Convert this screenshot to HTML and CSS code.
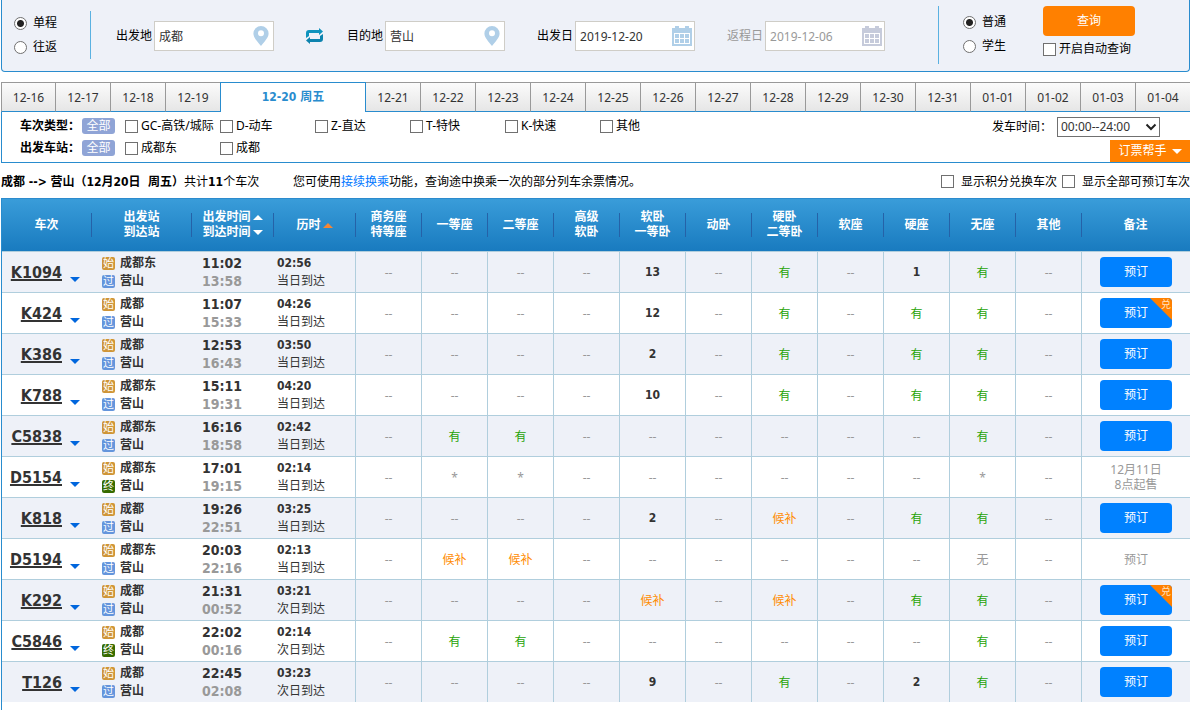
FILE: index.html
```html
<!DOCTYPE html>
<html lang="zh-CN">
<head>
<meta charset="utf-8">
<title>车票查询</title>
<link rel="stylesheet" href="styles.css">
</head>
<body>
<svg class="defs" width="0" height="0" aria-hidden="true">
  <symbol id="pin" viewBox="0 0 16 20"><path d="M8 0a7.6 7.6 0 0 1 7.6 7.6C15.6 12 11 16 8 20 5 16 .4 12 .4 7.6A7.6 7.6 0 0 1 8 0zm0 4.2a3 3 0 1 0 0 6 3 3 0 0 0 0-6z" fill-rule="evenodd"/></symbol>
  <symbol id="calendar" viewBox="0 0 20 20"><path d="M0 2h3V0h4v2h6V0h4v2h3v18H0z"/><path fill="#fff" d="M2 7h16v11H2z"/><path d="M3 8h4v4H3zm5 0h4v4H8zm5 0h4v4h-4zM3 13h4v4H3zm5 0h4v4H8zm5 0h4v4h-4z"/></symbol>
</svg>

<form class="search">
  <div class="choices trip">
    <label><input type="radio" name="trip" checked><span>单程</span></label>
    <label><input type="radio" name="trip"><span>往返</span></label>
  </div>
  <div class="fields">
    <div class="field"><label for="from">出发地</label><span class="box"><input id="from" type="text" value="成都"><svg class="pin"><use href="#pin"/></svg></span></div>
    <button class="swap" type="button" aria-label="交换"><svg viewBox="0 0 17 16"><path fill="#0f93bd" d="M0 10V5q0-3 3-3h10V0l4 3.500-4 3.500V5H3v3z"/><path fill="#0d83ae" d="M17 6v5q0 3-3 3H4v2l-4-3.500L4 9v2h10V8z"/></svg></button>
    <div class="field"><label for="to">目的地</label><span class="box"><input id="to" type="text" value="营山"><svg class="pin"><use href="#pin"/></svg></span></div>
    <div class="field date"><label for="go">出发日</label><span class="box"><input id="go" type="text" value="2019-12-20"><svg class="cal"><use href="#calendar"/></svg></span></div>
    <div class="field date off"><label for="back">返程日</label><span class="box"><input id="back" type="text" value="2019-12-06"><svg class="cal"><use href="#calendar"/></svg></span></div>
  </div>
  <div class="choices kind">
    <label><input type="radio" name="kind" checked><span>普通</span></label>
    <label><input type="radio" name="kind"><span>学生</span></label>
  </div>
  <div class="submit">
    <button class="query" type="button">查询</button>
    <label class="check"><input type="checkbox"><span>开启自动查询</span></label>
  </div>
</form>

<nav class="days">
  <button>12-16</button><button>12-17</button><button>12-18</button><button>12-19</button><button class="current">12-20 周五</button><button>12-21</button><button>12-22</button><button>12-23</button><button>12-24</button><button>12-25</button><button>12-26</button><button>12-27</button><button>12-28</button><button>12-29</button><button>12-30</button><button>12-31</button><button>01-01</button><button>01-02</button><button>01-03</button><button>01-04</button>
</nav>

<section class="filters">
  <div class="filter-rows">
    <div class="filter">
      <b>车次类型：</b><button class="all">全部</button>
      <label class="check"><input type="checkbox"><span>GC-高铁/城际</span></label>
      <label class="check"><input type="checkbox"><span>D-动车</span></label>
      <label class="check"><input type="checkbox"><span>Z-直达</span></label>
      <label class="check"><input type="checkbox"><span>T-特快</span></label>
      <label class="check"><input type="checkbox"><span>K-快速</span></label>
      <label class="check"><input type="checkbox"><span>其他</span></label>
    </div>
    <div class="filter">
      <b>出发车站：</b><button class="all">全部</button>
      <label class="check"><input type="checkbox"><span>成都东</span></label>
      <label class="check"><input type="checkbox"><span>成都</span></label>
    </div>
  </div>
  <div class="side">
    <div class="time"><label for="time">发车时间：</label><span class="select"><select id="time"><option>00:00--24:00</option></select><svg viewBox="0 0 12 8"><path d="M1.500 1.500 6 6l4.500-4.500" fill="none" stroke="#222" stroke-width="2"/></svg></span></div>
    <button class="helper">订票帮手<i class="tri down"></i></button>
  </div>
</section>

<div class="summary">
  <p class="count"><b>成都 --&gt; 营山（12月20日&nbsp; 周五）</b>共计<b>11</b>个车次</p>
  <p>您可使用<a href="#">接续换乘</a>功能，查询途中换乘一次的部分列车余票情况。</p>
  <div class="options">
    <label class="check"><input type="checkbox"><span>显示积分兑换车次</span></label>
    <label class="check"><input type="checkbox"><span>显示全部可预订车次</span></label>
  </div>
</div>

<main class="results">
<table class="trains">
  <colgroup><col class="c-no"><col class="c-station"><col class="c-time"><col class="c-time"><col class="c-seat" span="11"><col></colgroup>
  <thead>
    <tr><th>车次</th><th>出发站<br>到达站</th><th><span class="sort">出发时间<i class="tri up"></i></span><span class="sort">到达时间<i class="tri down"></i></span></th><th><span class="sort">历时<i class="tri up on"></i></span></th><th>商务座<br>特等座</th><th>一等座</th><th>二等座</th><th>高级<br>软卧</th><th>软卧<br>一等卧</th><th>动卧</th><th>硬卧<br>二等卧</th><th>软座</th><th>硬座</th><th>无座</th><th>其他</th><th>备注</th></tr>
  </thead>
  <tbody>
    <tr><td class="no"><a href="#">K1094</a><i class="tri down"></i></td><td class="st"><p><i class="s">始</i>成都东</p><p><i class="g">过</i>营山</p></td><td class="tm"><p>11:02</p><p>13:58</p></td><td class="du"><b>02:56</b><p>当日到达</p></td><td>--</td><td>--</td><td>--</td><td>--</td><td class="num">13</td><td>--</td><td class="yes">有</td><td>--</td><td class="num">1</td><td class="yes">有</td><td>--</td><td><button class="book">预订</button></td></tr>
    <tr><td class="no"><a href="#">K424</a><i class="tri down"></i></td><td class="st"><p><i class="s">始</i>成都</p><p><i class="g">过</i>营山</p></td><td class="tm"><p>11:07</p><p>15:33</p></td><td class="du"><b>04:26</b><p>当日到达</p></td><td>--</td><td>--</td><td>--</td><td>--</td><td class="num">12</td><td>--</td><td class="yes">有</td><td>--</td><td class="yes">有</td><td class="yes">有</td><td>--</td><td><button class="book">预订<span class="points">兑</span></button></td></tr>
    <tr><td class="no"><a href="#">K386</a><i class="tri down"></i></td><td class="st"><p><i class="s">始</i>成都</p><p><i class="g">过</i>营山</p></td><td class="tm"><p>12:53</p><p>16:43</p></td><td class="du"><b>03:50</b><p>当日到达</p></td><td>--</td><td>--</td><td>--</td><td>--</td><td class="num">2</td><td>--</td><td class="yes">有</td><td>--</td><td class="yes">有</td><td class="yes">有</td><td>--</td><td><button class="book">预订</button></td></tr>
    <tr><td class="no"><a href="#">K788</a><i class="tri down"></i></td><td class="st"><p><i class="s">始</i>成都东</p><p><i class="g">过</i>营山</p></td><td class="tm"><p>15:11</p><p>19:31</p></td><td class="du"><b>04:20</b><p>当日到达</p></td><td>--</td><td>--</td><td>--</td><td>--</td><td class="num">10</td><td>--</td><td class="yes">有</td><td>--</td><td class="yes">有</td><td class="yes">有</td><td>--</td><td><button class="book">预订</button></td></tr>
    <tr><td class="no"><a href="#">C5838</a><i class="tri down"></i></td><td class="st"><p><i class="s">始</i>成都东</p><p><i class="g">过</i>营山</p></td><td class="tm"><p>16:16</p><p>18:58</p></td><td class="du"><b>02:42</b><p>当日到达</p></td><td>--</td><td class="yes">有</td><td class="yes">有</td><td>--</td><td>--</td><td>--</td><td>--</td><td>--</td><td>--</td><td class="yes">有</td><td>--</td><td><button class="book">预订</button></td></tr>
    <tr><td class="no"><a href="#">D5154</a><i class="tri down"></i></td><td class="st"><p><i class="s">始</i>成都东</p><p><i class="z">终</i>营山</p></td><td class="tm"><p>17:01</p><p>19:15</p></td><td class="du"><b>02:14</b><p>当日到达</p></td><td>--</td><td>*</td><td>*</td><td>--</td><td>--</td><td>--</td><td>--</td><td>--</td><td>--</td><td>*</td><td>--</td><td>12月11日<br>8点起售</td></tr>
    <tr><td class="no"><a href="#">K818</a><i class="tri down"></i></td><td class="st"><p><i class="s">始</i>成都</p><p><i class="g">过</i>营山</p></td><td class="tm"><p>19:26</p><p>22:51</p></td><td class="du"><b>03:25</b><p>当日到达</p></td><td>--</td><td>--</td><td>--</td><td>--</td><td class="num">2</td><td>--</td><td class="wait">候补</td><td>--</td><td class="yes">有</td><td class="yes">有</td><td>--</td><td><button class="book">预订</button></td></tr>
    <tr><td class="no"><a href="#">D5194</a><i class="tri down"></i></td><td class="st"><p><i class="s">始</i>成都东</p><p><i class="g">过</i>营山</p></td><td class="tm"><p>20:03</p><p>22:16</p></td><td class="du"><b>02:13</b><p>当日到达</p></td><td>--</td><td class="wait">候补</td><td class="wait">候补</td><td>--</td><td>--</td><td>--</td><td>--</td><td>--</td><td>--</td><td>无</td><td>--</td><td>预订</td></tr>
    <tr><td class="no"><a href="#">K292</a><i class="tri down"></i></td><td class="st"><p><i class="s">始</i>成都</p><p><i class="g">过</i>营山</p></td><td class="tm"><p>21:31</p><p>00:52</p></td><td class="du"><b>03:21</b><p>次日到达</p></td><td>--</td><td>--</td><td>--</td><td>--</td><td class="wait">候补</td><td>--</td><td class="wait">候补</td><td>--</td><td class="yes">有</td><td class="yes">有</td><td>--</td><td><button class="book">预订<span class="points">兑</span></button></td></tr>
    <tr><td class="no"><a href="#">C5846</a><i class="tri down"></i></td><td class="st"><p><i class="s">始</i>成都</p><p><i class="z">终</i>营山</p></td><td class="tm"><p>22:02</p><p>00:16</p></td><td class="du"><b>02:14</b><p>次日到达</p></td><td>--</td><td class="yes">有</td><td class="yes">有</td><td>--</td><td>--</td><td>--</td><td>--</td><td>--</td><td>--</td><td class="yes">有</td><td>--</td><td><button class="book">预订</button></td></tr>
    <tr><td class="no"><a href="#">T126</a><i class="tri down"></i></td><td class="st"><p><i class="s">始</i>成都</p><p><i class="g">过</i>营山</p></td><td class="tm"><p>22:45</p><p>02:08</p></td><td class="du"><b>03:23</b><p>次日到达</p></td><td>--</td><td>--</td><td>--</td><td>--</td><td class="num">9</td><td>--</td><td class="yes">有</td><td>--</td><td class="num">2</td><td class="yes">有</td><td>--</td><td><button class="book">预订</button></td></tr>
  </tbody>
</table>
</main>
</body>
</html>
```
FILE: styles.css
```css
* { box-sizing: border-box; }
body, button, input, select {
  font: 12px/16px "Noto Sans", "Noto Sans CJK SC", sans-serif;
}
b, th, .current, .no a, .st, .tm, .num {
  font-family: "DejaVu Sans Condensed", "Noto Sans CJK SC", sans-serif;
  font-weight: bold;
}
body { margin: 0 0 0 1px; color: #000; background: #fff; overflow-x: hidden; }
p { margin: 0; }
i { font-style: normal; }
button { border: 0; padding: 0; cursor: pointer; white-space: nowrap; }
a { text-decoration: none; }
.defs { display: block; }

input[type="radio"], input[type="checkbox"] {
  appearance: none; flex: none; width: 13px; height: 13px; margin: 0;
  border: 1px solid #707070; background: #fff;
}
input[type="radio"] { border-radius: 50%; }
input[type="radio"]:checked { background: radial-gradient(circle, #222 3px, #fff 4px); }
.check { display: flex; align-items: center; gap: 3px; white-space: nowrap; }

.tri { display: inline-block; border: 5px solid transparent; }
.tri.down { border-top-color: currentColor; border-bottom: 0; }
.tri.up { border-bottom-color: currentColor; border-top: 0; }

/* search bar */
.search {
  display: flex; align-items: flex-start; height: 72px;
  background: #eef1f8; border: 1px solid #298cce; border-top: 0; border-radius: 0 0 4px 4px;
}
.choices { display: flex; flex-direction: column; gap: 8px; }
.choices label { display: flex; align-items: center; gap: 6px; white-space: nowrap; }
.trip { width: 89px; height: 48px; margin-top: 11px; padding: 4px 0 0 12px; border-right: 1px solid #5ab1e1; }
.fields { flex: 1; display: flex; align-items: center; padding: 21px 0 0 25px; }
.field { display: flex; align-items: center; gap: 2px; }
.date { margin-left: 32px; }
.box { position: relative; display: block; width: 120px; color: #b0cfe8; }
.box input { display: block; width: 100%; height: 30px; padding: 0 4px; border: 1px solid #cfcdc7; color: #333; background: #fff; }
.box svg { position: absolute; top: 5px; fill: currentColor; }
.pin { right: 5px; width: 16px; height: 20px; }
.cal { right: 3px; width: 20px; height: 20px; }
.off, .off .box input { color: #999; }
.off .box { color: #c6cbdb; }
.swap { width: 17px; height: 16px; margin: 0 24px 0 32px; background: none; }
.swap svg { display: block; }
.kind { width: 105px; height: 58px; margin-top: 6px; padding: 8px 0 0 24px; border-left: 1px solid #5ab1e1; }
.submit { width: 146px; padding-top: 6px; }
.query { display: block; width: 92px; height: 30px; margin-bottom: 5px; border-radius: 4px; color: #fff; background: #ff8000; }

/* date tabs */
.days { display: flex; height: 30px; margin-top: 10px; }
.days button {
  flex: 1 1 0; padding-top: 1px; color: #333; background: linear-gradient(#fbfbfb, #e6e6e6);
  border: solid #999; border-width: 1px 0 1px 1px; border-bottom-color: #298cce;
}
.days button:first-child { flex: 0 0 54px; }
.days .current {
  flex: 0 0 146px; padding: 0 0 2px; color: #298cce; background: #fff;
  border-color: #298cce; border-width: 1px 1px 0;
}
.days .current + button { border-left: 0; }

/* filters */
.filters { display: flex; justify-content: space-between; height: 51px; border: solid #298cce; border-width: 0 0 1px 1px; }
.filter-rows { padding: 3px 0 0 18px; }
.filter { display: flex; align-items: center; height: 22px; }
.filter b { width: 62px; white-space: nowrap; }
.filter .check { width: 95px; }
.all { width: 33px; height: 16px; margin-right: 10px; border-radius: 3px; color: #fff; background: #8fa4d6; }
.side { display: flex; flex-direction: column; align-items: flex-end; justify-content: space-between; padding-top: 5px; }
.time { display: flex; align-items: center; gap: 5px; margin-right: 30px; white-space: nowrap; }
.select { position: relative; }
.select select { display: block; appearance: none; width: 103px; height: 20px; padding: 0 3px; border: 1px solid #707070; border-radius: 0; color: #333; background: #fff; }
.select svg { position: absolute; right: 3px; top: 6px; width: 12px; height: 8px; pointer-events: none; }
.helper { display: flex; align-items: center; justify-content: center; gap: 5px; width: 80px; height: 22px; color: #fff; background: #ff8000; }

/* result summary */
.summary { display: flex; align-items: center; height: 35px; padding-top: 2px; white-space: nowrap; }
.count { width: 292px; }
.summary a { color: #0077ff; }
.options { display: flex; gap: 5px; margin-left: auto; }
.options .check { gap: 7px; }

/* timetable */
.results { padding-bottom: 16px; border-left: 1px solid #298cce; }
.trains { width: 100%; table-layout: fixed; border-spacing: 0; }
.c-no { width: 90px; }
.c-station { width: 100px; }
.c-time { width: 82px; }
.c-seat { width: 66px; }
.trains thead { background: linear-gradient(#3a9dda, #187abf); }
.trains th {
  height: 54px; padding: 0 1px 0 0; color: #fff; line-height: 15px;
  border: solid #2c8bcd; border-width: 1px 0; border-bottom-color: #b0cedd;
  background: linear-gradient(#2562a8, #2562a8) right center / 1px 24px no-repeat;
}
.trains th:last-child { background: none; }
.sort { display: flex; align-items: center; justify-content: center; gap: 2px; }
.sort .on { color: #f58634; }
.trains td {
  height: 41px; padding: 0; text-align: center; color: #999; line-height: 15px;
  border: solid #b0cedd; border-width: 0 1px 1px 0;
}
.trains td:last-child { border-right: 0; }
.trains tr:last-child td { height: 40px; border-bottom: 0; }
.trains tbody tr:nth-child(odd) { background: #eef1f8; }
.trains .no, .trains .st, .trains .tm, .trains .du { text-align: left; color: #333; line-height: 18px; }
.trains .no, .trains .st, .trains .tm { border-right: 0; }
.trains .no { text-align: right; padding: 2px 12px 0 0; white-space: nowrap; }
.no a { color: #333; font-size: 16px; text-decoration: underline 2px; text-underline-offset: 1px; }
.no .tri { margin-left: 8px; color: #0066dd; vertical-align: -4px; }
.trains .st { padding-left: 10px; }
.st p { display: flex; align-items: center; gap: 5px; }
.st i { width: 13px; height: 13px; border-radius: 2px; color: #fff; font-size: 11px; font-weight: normal; line-height: 13px; text-align: center; }
.s { background: #cf9537; }
.g { background: #6495dc; }
.z { background: #376b00; }
.trains .tm { padding-left: 10px; font-size: 14px; }
.tm p + p { color: #999; }
.trains .du { padding-left: 3px; }
.du b { display: block; }
.trains .num { color: #333; }
.trains .yes { color: #26a306; }
.trains .wait { color: #ff8c00; }
.book { position: relative; display: block; width: 72px; height: 30px; margin: 0 auto; border-radius: 4px; color: #fff; background: #0081ff; overflow: hidden; }
.points {
  position: absolute; top: 0; right: 0; width: 22px; height: 22px; padding-left: 10px;
  color: #ffe2c0; font-size: 10px; line-height: 13px;
  background: linear-gradient(to top right, transparent 49%, #ff8000 51%);
}
```
